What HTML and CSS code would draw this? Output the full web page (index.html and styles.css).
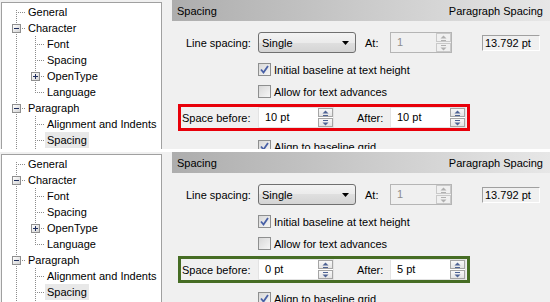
FILE: index.html
```html
<!DOCTYPE html>
<html lang="en">
<head>
    <meta charset="UTF-8">
    <title>Paragraph Spacing</title>
    <link rel="stylesheet" href="styles.css">
</head>
<body>
    <!-- Before: 10 pt / 10 pt -->
    <div class="panel">
        <div class="tree">
            <div class="row"><span class="g g-first"></span><span class="label">General</span></div>
            <div class="row"><span class="g g-tee"><span class="exp minus"></span></span><span class="label">Character</span></div>
            <div class="row"><span class="g g-line"></span><span class="g g-tee"></span><span class="label">Font</span></div>
            <div class="row"><span class="g g-line"></span><span class="g g-tee"></span><span class="label">Spacing</span></div>
            <div class="row"><span class="g g-line"></span><span class="g g-tee"><span class="exp plus"></span></span><span class="label">OpenType</span></div>
            <div class="row"><span class="g g-line"></span><span class="g g-end"></span><span class="label">Language</span></div>
            <div class="row"><span class="g g-tee"><span class="exp minus"></span></span><span class="label">Paragraph</span></div>
            <div class="row"><span class="g g-line"></span><span class="g g-tee"></span><span class="label">Alignment and Indents</span></div>
            <div class="row"><span class="g g-line"></span><span class="g g-tee"></span><span class="label selected">Spacing</span></div>
            <div class="row"><span class="g g-line"></span><span class="g g-tee"></span></div>
        </div>

        <div class="pane">
            <div class="head"><span>Spacing</span><span>Paragraph Spacing</span></div>

            <div class="line">
                <span class="caption">Line spacing:</span>
                <div class="select"><span>Single</span><svg width="7" height="4" viewBox="0 0 7 4"><path d="M0 0H7L3.5 4Z" fill="#000"/></svg></div>
                <span class="at">At:</span>
                <div class="spinbox off">
                    <span class="value">1</span>
                    <span class="spin">
                        <span class="spin-btn"><svg width="7" height="6" viewBox="0 0 7 6"><path d="M0.5 3.5L3.5 0.5L6.5 3.5Z"/><rect x="1" y="5" width="5" height="1"/></svg></span>
                        <span class="spin-btn"><svg width="7" height="6" viewBox="0 0 7 6"><rect x="1" y="0" width="5" height="1"/><path d="M0.5 2.5H6.5L3.5 5.5Z"/></svg></span>
                    </span>
                </div>
                <span class="readout">13.792 pt</span>
            </div>

            <div class="opt"><span class="check on"><svg width="11" height="11" viewBox="0 0 11 11"><path d="M2 5.5L4.5 8.5L9 2" fill="none" stroke="#4860a6" stroke-width="1.8"/></svg></span>Initial baseline at text height</div>
            <div class="opt"><span class="check"></span>Allow for text advances</div>

            <div class="fields bad">
                <span class="caption">Space before:</span>
                <div class="spinbox">
                    <span class="value">10 pt</span>
                    <span class="spin">
                        <span class="spin-btn"><svg width="7" height="6" viewBox="0 0 7 6"><path d="M0.5 3.5L3.5 0.5L6.5 3.5Z"/><rect x="1" y="5" width="5" height="1"/></svg></span>
                        <span class="spin-btn"><svg width="7" height="6" viewBox="0 0 7 6"><rect x="1" y="0" width="5" height="1"/><path d="M0.5 2.5H6.5L3.5 5.5Z"/></svg></span>
                    </span>
                </div>
                <span class="after">After:</span>
                <div class="spinbox">
                    <span class="value">10 pt</span>
                    <span class="spin">
                        <span class="spin-btn"><svg width="7" height="6" viewBox="0 0 7 6"><path d="M0.5 3.5L3.5 0.5L6.5 3.5Z"/><rect x="1" y="5" width="5" height="1"/></svg></span>
                        <span class="spin-btn"><svg width="7" height="6" viewBox="0 0 7 6"><rect x="1" y="0" width="5" height="1"/><path d="M0.5 2.5H6.5L3.5 5.5Z"/></svg></span>
                    </span>
                </div>
            </div>

            <div class="opt last"><span class="check on"><svg width="11" height="11" viewBox="0 0 11 11"><path d="M2 5.5L4.5 8.5L9 2" fill="none" stroke="#4860a6" stroke-width="1.8"/></svg></span>Align to baseline grid</div>
        </div>
    </div>

    <!-- After: 0 pt / 5 pt -->
    <div class="panel">
        <div class="tree">
            <div class="row"><span class="g g-first"></span><span class="label">General</span></div>
            <div class="row"><span class="g g-tee"><span class="exp minus"></span></span><span class="label">Character</span></div>
            <div class="row"><span class="g g-line"></span><span class="g g-tee"></span><span class="label">Font</span></div>
            <div class="row"><span class="g g-line"></span><span class="g g-tee"></span><span class="label">Spacing</span></div>
            <div class="row"><span class="g g-line"></span><span class="g g-tee"><span class="exp plus"></span></span><span class="label">OpenType</span></div>
            <div class="row"><span class="g g-line"></span><span class="g g-end"></span><span class="label">Language</span></div>
            <div class="row"><span class="g g-tee"><span class="exp minus"></span></span><span class="label">Paragraph</span></div>
            <div class="row"><span class="g g-line"></span><span class="g g-tee"></span><span class="label">Alignment and Indents</span></div>
            <div class="row"><span class="g g-line"></span><span class="g g-tee"></span><span class="label selected">Spacing</span></div>
            <div class="row"><span class="g g-line"></span><span class="g g-tee"></span></div>
        </div>

        <div class="pane">
            <div class="head"><span>Spacing</span><span>Paragraph Spacing</span></div>

            <div class="line">
                <span class="caption">Line spacing:</span>
                <div class="select"><span>Single</span><svg width="7" height="4" viewBox="0 0 7 4"><path d="M0 0H7L3.5 4Z" fill="#000"/></svg></div>
                <span class="at">At:</span>
                <div class="spinbox off">
                    <span class="value">1</span>
                    <span class="spin">
                        <span class="spin-btn"><svg width="7" height="6" viewBox="0 0 7 6"><path d="M0.5 3.5L3.5 0.5L6.5 3.5Z"/><rect x="1" y="5" width="5" height="1"/></svg></span>
                        <span class="spin-btn"><svg width="7" height="6" viewBox="0 0 7 6"><rect x="1" y="0" width="5" height="1"/><path d="M0.5 2.5H6.5L3.5 5.5Z"/></svg></span>
                    </span>
                </div>
                <span class="readout">13.792 pt</span>
            </div>

            <div class="opt"><span class="check on"><svg width="11" height="11" viewBox="0 0 11 11"><path d="M2 5.5L4.5 8.5L9 2" fill="none" stroke="#4860a6" stroke-width="1.8"/></svg></span>Initial baseline at text height</div>
            <div class="opt"><span class="check"></span>Allow for text advances</div>

            <div class="fields good">
                <span class="caption">Space before:</span>
                <div class="spinbox">
                    <span class="value">0 pt</span>
                    <span class="spin">
                        <span class="spin-btn"><svg width="7" height="6" viewBox="0 0 7 6"><path d="M0.5 3.5L3.5 0.5L6.5 3.5Z"/><rect x="1" y="5" width="5" height="1"/></svg></span>
                        <span class="spin-btn"><svg width="7" height="6" viewBox="0 0 7 6"><rect x="1" y="0" width="5" height="1"/><path d="M0.5 2.5H6.5L3.5 5.5Z"/></svg></span>
                    </span>
                </div>
                <span class="after">After:</span>
                <div class="spinbox">
                    <span class="value">5 pt</span>
                    <span class="spin">
                        <span class="spin-btn"><svg width="7" height="6" viewBox="0 0 7 6"><path d="M0.5 3.5L3.5 0.5L6.5 3.5Z"/><rect x="1" y="5" width="5" height="1"/></svg></span>
                        <span class="spin-btn"><svg width="7" height="6" viewBox="0 0 7 6"><rect x="1" y="0" width="5" height="1"/><path d="M0.5 2.5H6.5L3.5 5.5Z"/></svg></span>
                    </span>
                </div>
            </div>

            <div class="opt last"><span class="check on"><svg width="11" height="11" viewBox="0 0 11 11"><path d="M2 5.5L4.5 8.5L9 2" fill="none" stroke="#4860a6" stroke-width="1.8"/></svg></span>Align to baseline grid</div>
        </div>
    </div>
</body>
</html>
```

FILE: styles.css
```css
* {
    margin: 0;
    padding: 0;
    box-sizing: border-box;
}

body {
    background: #fff;
    font-family: "Liberation Sans", Arial, sans-serif;
    font-size: 11px;
    color: #000;
}

/* One dialog snapshot */
.panel {
    display: flex;
    height: 149px;
    overflow: hidden;
    background: #f0f0f0;
}

.panel + .panel {
    margin-top: 3px;
    height: 150px;
}

/* Category tree */
.tree {
    flex: none;
    width: 161px;
    height: 190px;
    margin: 2px 0 0 1px;
    padding-top: 1px;
    background: #fff;
    border: 1px solid #a0a0a0;
}

.row {
    display: flex;
    height: 16px;
    line-height: 16px;
    padding-left: 5px;
    white-space: nowrap;
}

.g {
    flex: none;
    width: 19px;
    height: 16px;
}

.g-line {
    background: repeating-linear-gradient(#8c8c8c 0 1px, transparent 1px 2px) 9px 0 / 1px 16px no-repeat;
}

.g-tee {
    background:
        repeating-linear-gradient(to right, #8c8c8c 0 1px, transparent 1px 2px) 11px 8px / 8px 1px no-repeat,
        repeating-linear-gradient(#8c8c8c 0 1px, transparent 1px 2px) 9px 0 / 1px 16px no-repeat;
}

.g-first {
    background:
        repeating-linear-gradient(to right, #8c8c8c 0 1px, transparent 1px 2px) 11px 8px / 8px 1px no-repeat,
        repeating-linear-gradient(#8c8c8c 0 1px, transparent 1px 2px) 9px 6px / 1px 10px no-repeat;
}

.g-end {
    background:
        repeating-linear-gradient(to right, #8c8c8c 0 1px, transparent 1px 2px) 11px 8px / 8px 1px no-repeat,
        repeating-linear-gradient(#8c8c8c 0 1px, transparent 1px 2px) 9px 0 / 1px 9px no-repeat;
}

.exp {
    display: block;
    width: 9px;
    height: 9px;
    margin: 4px 0 0 5px;
    border: 1px solid #8f8f8f;
}

.exp.minus {
    background:
        linear-gradient(#1e2d5c, #1e2d5c) center / 5px 1px no-repeat,
        linear-gradient(135deg, #fff, #d2d2d2);
}

.exp.plus {
    background:
        linear-gradient(#1e2d5c, #1e2d5c) center / 5px 1px no-repeat,
        linear-gradient(#1e2d5c, #1e2d5c) center / 1px 5px no-repeat,
        linear-gradient(135deg, #fff, #d2d2d2);
}

.label {
    padding: 0 2px;
}

.label.selected {
    background: #e8e8e8;
}

/* Settings pane */
.pane {
    flex: 1;
    margin-left: 10px;
}

.head {
    display: flex;
    justify-content: space-between;
    height: 21px;
    padding: 2px 7px 0 5px;
    line-height: 19px;
    background: linear-gradient(to right, #adadad, #e7e7e7);
}

.line {
    display: flex;
    align-items: center;
    height: 21px;
    margin-top: 11px;
    padding-left: 14px;
}

.line .caption {
    width: 72px;
}

.select {
    display: flex;
    align-items: center;
    justify-content: space-between;
    width: 98px;
    height: 21px;
    padding: 0 6px 0 3px;
    border: 1px solid #707070;
    border-radius: 3px;
    background: linear-gradient(#f3f3f3, #ebebeb 50%, #dfdfdf 50%, #d4d4d4);
}

.at {
    width: 25px;
    margin-left: 9px;
}

.spinbox {
    display: flex;
    width: 76px;
    height: 21px;
    background: #fff;
    border: 1px solid #e3e3e3;
}

.spinbox .value {
    flex: 1;
    padding-left: 6px;
    line-height: 19px;
}

.spin {
    display: flex;
    flex-direction: column;
    gap: 1px;
    width: 16px;
    padding: 0 0 0 1px;
}

.spin-btn {
    display: flex;
    flex: 1;
    align-items: center;
    justify-content: center;
    border: 1px solid #a5a5a5;
    background: linear-gradient(#f8f8f8, #e4e4e4);
}

.spin-btn svg {
    fill: #4e6394;
}

.spinbox.off {
    width: 62px;
    background: #f0f0f0;
    border-color: #b5b5b5;
    color: #8d8d8d;
}

.spinbox.off .spin-btn {
    border-color: #c9c9c9;
    background: #f0f0f0;
}

.spinbox.off .spin-btn svg {
    fill: #b0b0b0;
}

.readout {
    width: 58px;
    height: 16px;
    margin-left: 30px;
    padding-left: 2px;
    line-height: 14px;
    border: 1px solid;
    border-color: #a0a0a0 #fff #fff #a0a0a0;
}

/* Checkbox rows */
.opt {
    display: flex;
    align-items: center;
    gap: 3px;
    height: 13px;
    margin-top: 10px;
    padding-left: 86px;
    white-space: nowrap;
}

.opt + .opt {
    margin-top: 9px;
}

.opt.last {
    margin-top: 9px;
}

.check {
    display: flex;
    align-items: center;
    justify-content: center;
    flex: none;
    width: 13px;
    height: 13px;
    border: 1px solid #8e8f8f;
    background: linear-gradient(135deg, #d8d8d8, #f6f6f6);
}

/* Highlighted before/after fields */
.fields {
    display: flex;
    align-items: center;
    width: 292px;
    height: 27px;
    margin: 6px 0 0 6px;
    padding-left: 1px;
    border: 3px solid;
}

.fields.bad {
    border-color: #e8000a;
}

.fields.good {
    border-color: #466d24;
}

.fields .caption {
    width: 76px;
}

.after {
    width: 33px;
    margin-left: 23px;
}
```
